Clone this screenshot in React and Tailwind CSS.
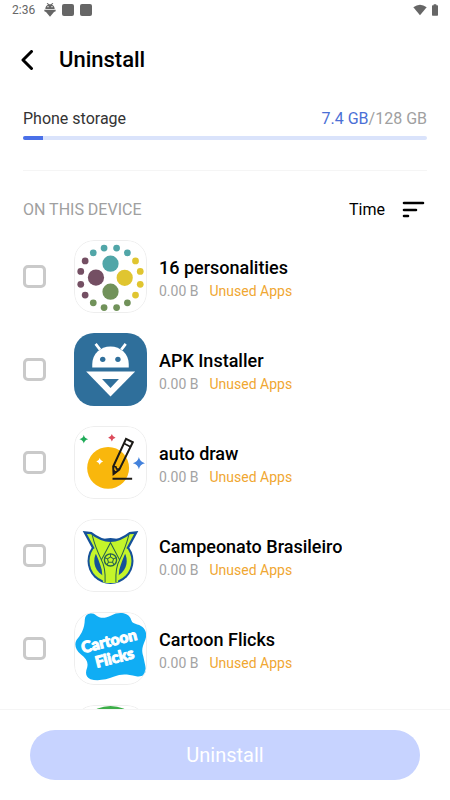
import { useState } from 'react'

// ─── Status bar icons ───
function RobotIcon() {
  return (
    <svg width="12" height="14" viewBox="0 0 36 42" fill="#666" aria-hidden="true">
      <path d="M4 18C4 10 9 6 12 5L8 1l3-1 4 4h6l4-4 3 1-4 4c3 1 8 5 8 13z" />
      <path d="M1 20h34v5l-5 2-12 14L6 27l-5-2z" />
      <circle cx="12" cy="11" r="2" fill="#fff" />
      <circle cx="24" cy="11" r="2" fill="#fff" />
    </svg>
  )
}

function WifiIcon() {
  return (
    <svg width="14" height="12" viewBox="0 0 42 36" fill="#666" aria-hidden="true">
      <path d="M1 10Q21-6 41 10L21 34z" />
    </svg>
  )
}

function BatteryIcon() {
  return (
    <svg width="6" height="12" viewBox="0 0 18 36" fill="#666" aria-hidden="true">
      <path d="M5 1h8v3h3q2 0 2 2v27q0 2-2 2H2q-2 0-2-2V6q0-2 2-2h3z" />
    </svg>
  )
}

// ─── App logos ───
function PersonalitiesLogo() {
  const groups = [
    { color: '#51a6a8', big: [108, 70], dots: [[57, 38], [89, 24], [126, 24], [158, 38]] },
    { color: '#744f63', big: [65, 111], dots: [[33, 62], [20, 93], [20, 131], [33, 163]] },
    { color: '#e0c530', big: [150, 112], dots: [[182, 62], [196, 93], [196, 131], [182, 163]] },
    { color: '#71925a', big: [108, 153], dots: [[57, 186], [89, 200], [126, 200], [158, 186]] },
  ]
  return (
    <svg viewBox="0 0 216 216" className="size-full">
      {groups.map((g) => (
        <g key={g.color} fill={g.color}>
          <circle cx={g.big[0]} cy={g.big[1]} r="24" />
          {g.dots.map(([x, y]) => (
            <circle key={`${x}-${y}`} cx={x} cy={y} r="10" />
          ))}
        </g>
      ))}
    </svg>
  )
}

function ApkLogo() {
  return (
    <svg viewBox="0 0 216 216" className="size-full">
      <rect width="216" height="216" fill="#2f6f9b" />
      <path d="M54 102V92C54 62 78 40 108 40s54 22 54 52v10z" fill="#fff" />
      <path d="M64 32l13 17M153 32l-13 17" stroke="#fff" strokeWidth="8" />
      <circle cx="85" cy="78" r="8" fill="#2f6f9b" />
      <circle cx="130" cy="78" r="8" fill="#2f6f9b" />
      <path d="M36 114h145l-73 74z" fill="#fff" />
      <path d="M83 136h50l-25 27z" fill="#2f6f9b" />
    </svg>
  )
}

function AutoDrawLogo() {
  return (
    <svg viewBox="0 0 216 216" className="size-full">
      <circle cx="101" cy="124" r="62" fill="#f9b70c" />
      <path d="M29 26q2 11 13 13-11 2-13 13-2-11-13-13 11-2 13-13z" fill="#1fab58" />
      <path d="M112 24q2 9 11 11-9 2-11 11-2-9-11-11 9-2 11-11z" fill="#dc4a5b" />
      <path d="M192 92q3 15 18 18-15 3-18 18-3-15-18-18 15-3 18-18z" fill="#4382dc" />
      <path d="M76 95q2 8 10 10-8 2-10 10-2-8-10-10 8-2 10-10z" fill="#fff" />
      <path d="M154 38l20 10-40 81-17 13-1-22z" fill="none" stroke="#1c1a17" strokeWidth="6" />
      <path d="M147 51l21 11M116 119l8 2 2 6 8 1" fill="none" stroke="#1c1a17" strokeWidth="5" />
      <path d="M117 129l10 7-11 9z" fill="#1c1a17" />
      <path d="M114 156h58" stroke="#1c1a17" strokeWidth="6" />
    </svg>
  )
}

function BrasileiraoLogo() {
  return (
    <svg viewBox="0 0 216 216" className="size-full">
      <circle cx="108" cy="124" r="68" fill="#155199" />
      <circle cx="108" cy="124" r="62" fill="#c4f52a" />
      <circle cx="108" cy="124" r="48" fill="#155199" />
      <path
        d="M32 40L51 42Q108 87 165 42L184 40 158 88Q141 124 134 150L130 187Q108 192 86 187L82 150Q75 124 58 88Z"
        fill="#c4f52a"
      />
      <path
        d="M58 88L32 40 51 42Q108 87 165 42L184 40 158 88"
        fill="none"
        stroke="#155199"
        strokeWidth="7"
      />
      <path
        d="M54 48Q62 82 81 121L108 70l27 51Q154 82 162 48M81 121q13 22 11 66M135 121q-13 22-11 66"
        fill="none"
        stroke="#28634f"
        strokeWidth="3"
      />
      <circle cx="108" cy="121" r="18" fill="#c4f52a" stroke="#28634f" strokeWidth="4" />
      <path
        d="M108 112l9 6-3 10h-12l-3-10zM108 103v9M117 118l9-4M114 128l5 8M102 128l-5 8M99 118l-9-4"
        fill="none"
        stroke="#28634f"
        strokeWidth="3"
      />
    </svg>
  )
}

function CartoonFlicksLogo() {
  return (
    <svg viewBox="0 0 216 216" className="size-full">
      <path
        d="M32 22C34 4 52-2 66 10C78 20 92 19 110 10C130-1 158 0 167 18C172 31 171 32 187 37C208 42 219 60 211 82C202 105 199 111 205 131L212 164C216 184 203 193 184 190C155 183 138 183 119 191C94 202 66 204 49 199C34 193 33 180 39 164C43 148 36 138 20 125C2 109-1 91 12 77C22 64 31 49 32 22Z"
        fill="#10adf4"
      />
      <g
        fill="#fff"
        stroke="#fff"
        strokeWidth="3"
        strokeLinejoin="round"
        fontFamily="Lato, 'Open Sans', sans-serif"
        fontWeight="900"
      >
        <text x="26" y="122" fontSize="46" transform="rotate(-14 26 122)">Cartoon</text>
        <text x="67" y="165" fontSize="46" transform="rotate(-14 67 165)">Flicks</text>
      </g>
    </svg>
  )
}

function GreenLogo() {
  return (
    <svg viewBox="0 0 216 216" className="size-full">
      <circle cx="108" cy="103" r="100" fill="#3dae49" />
    </svg>
  )
}

const apps = [
  { id: 'personalities', name: '16 personalities', Logo: PersonalitiesLogo },
  { id: 'apk', name: 'APK Installer', Logo: ApkLogo },
  { id: 'autodraw', name: 'auto draw', Logo: AutoDrawLogo },
  { id: 'brasileirao', name: 'Campeonato Brasileiro', Logo: BrasileiraoLogo },
  { id: 'cartoon', name: 'Cartoon Flicks', Logo: CartoonFlicksLogo },
  { id: 'green', name: '', Logo: GreenLogo },
]

function AppRow({ app, checked, onToggle }) {
  const { Logo } = app
  return (
    <li className="shrink-0">
      <label className="flex items-center py-[10px]">
        <input
          type="checkbox"
          checked={checked}
          onChange={onToggle}
          aria-label={app.name || 'App'}
          className="size-[23px] shrink-0 appearance-none rounded-[5px] border-3 border-[#cacaca] checked:border-[#4a70e8] checked:bg-[#4a70e8]"
        />
        <span className="relative ml-7 size-[73px] shrink-0 overflow-hidden rounded-[20px]">
          <Logo />
          {app.id !== 'apk' && (
            <span className="absolute inset-0 rounded-[20px] border border-[#eeeeee]" />
          )}
        </span>
        {app.name && (
          <span className="ml-3 flex min-w-0 flex-col pt-1">
            <span className="truncate text-lg leading-6 font-medium text-black">{app.name}</span>
            <span className="flex gap-[11px] text-sm leading-[22px]">
              <span className="text-[#a3a3a3]">0.00 B</span>
              <span className="text-[#f0a732]">Unused Apps</span>
            </span>
          </span>
        )}
      </label>
    </li>
  )
}

export default function App() {
  const [selected, setSelected] = useState([])

  const toggle = (id) => {
    setSelected((prev) => (prev.includes(id) ? prev.filter((x) => x !== id) : [...prev, id]))
  }

  return (
    <div className="flex h-screen flex-col bg-white font-[Roboto,sans-serif]">
      {/* Status bar */}
      <div className="flex h-5 shrink-0 items-center justify-between px-3 text-xs text-[#666]">
        <div className="flex items-center gap-[6px]">
          <span className="mr-[3px]">2:36</span>
          <RobotIcon />
          <span className="size-3 rounded-xs bg-[#666]" />
          <span className="size-3 rounded-xs bg-[#666]" />
        </div>
        <div className="flex items-center gap-[5px]">
          <WifiIcon />
          <BatteryIcon />
        </div>
      </div>

      {/* Header */}
      <header className="flex h-20 shrink-0 items-center gap-[25px] pl-5">
        <button type="button" aria-label="Back">
          <svg width="14" height="20" viewBox="0 0 14 20" fill="none" stroke="#000" strokeWidth="3" strokeLinecap="round" strokeLinejoin="round">
            <path d="M11.500 1.500L3 10l8.500 8.500" />
          </svg>
        </button>
        <h1 className="text-[22px] leading-8 font-medium text-black">Uninstall</h1>
      </header>

      {/* Storage */}
      <section className="mx-[23px] shrink-0 border-b border-[#f5f5f5] pt-[5px] pb-[30px]">
        <div className="flex justify-between text-base leading-7">
          <span className="text-[#333]">Phone storage</span>
          <span className="text-[#a0a0a0]">
            <span className="text-[#4b6fd6]">7.4 GB</span>/128 GB
          </span>
        </div>
        <div className="mt-[3px] h-1 overflow-hidden rounded-full bg-[#dae3fb]">
          <div className="h-full w-1/20 bg-[#4a70e8]" />
        </div>
      </section>

      {/* List heading */}
      <div className="mx-[23px] mt-[27px] flex h-6 shrink-0 items-center justify-between text-base">
        <h2 className="text-[#a0a0a0]">ON THIS DEVICE</h2>
        <button type="button" className="flex items-center gap-4 pr-[2px] text-black">
          Time
          <svg width="24" height="18" viewBox="0 0 24 18" fill="none" stroke="#000" strokeWidth="2.600" strokeLinecap="round" aria-hidden="true">
            <path d="M3 2h19M3 9h12M3 15h4" />
          </svg>
        </button>
      </div>

      {/* Apps */}
      <ul className="mx-[23px] mt-2 flex min-h-0 flex-1 flex-col overflow-hidden">
        {apps.map((app) => (
          <AppRow
            key={app.id}
            app={app}
            checked={selected.includes(app.id)}
            onToggle={() => toggle(app.id)}
          />
        ))}
      </ul>

      {/* Bottom action */}
      <footer className="shrink-0 border-t border-[#f5f5f5] px-[30px] py-5">
        <button type="button" className="h-[50px] w-full rounded-full bg-[#c7d3ff] text-xl text-white">
          Uninstall
        </button>
      </footer>
    </div>
  )
}
